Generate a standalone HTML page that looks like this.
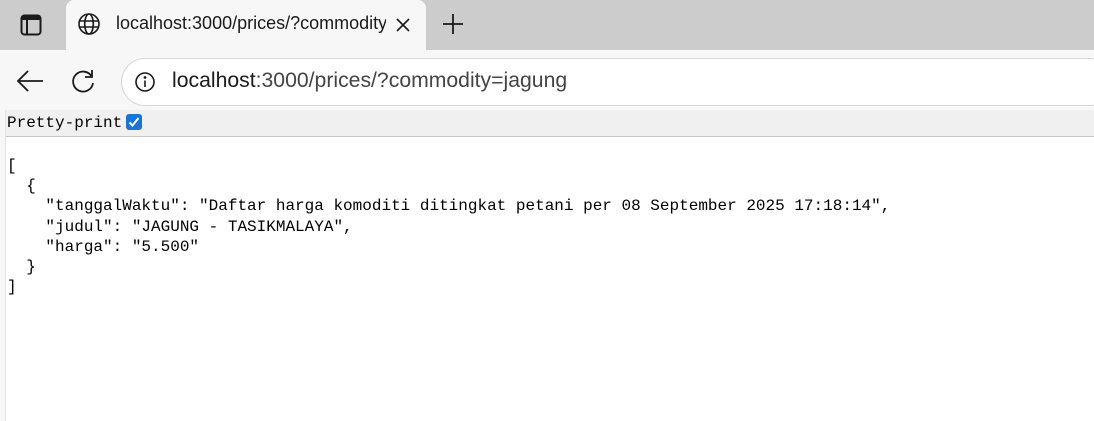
<!DOCTYPE html>
<html><head><style>
body{margin:0;width:1094px;height:421px;overflow:hidden;background:#f7f7f7;font-family:"Liberation Sans",sans-serif;position:relative}
.tabs{position:absolute;left:0;top:0;width:1094px;height:50px;background:#cccccc}
.tab{position:absolute;left:66px;top:0;width:360px;height:51px;background:#f7f7f7;border-radius:8px 8px 0 0}
.t{position:absolute;font-size:18px;color:#1a1a1a;white-space:nowrap}
.addr{position:absolute;left:121px;top:58px;width:990px;height:46px;background:#fff;border:1px solid #d6d6d6;border-radius:24px}
.page{position:absolute;left:5px;top:110px;width:1089px;height:311px;background:#fff;border-left:1px solid #e3e3e3}
.pp{position:absolute;left:0;top:0;width:1089px;height:26px;background:#f0f0f0;border-bottom:1px solid #c8c8c8;font-family:"Liberation Mono",monospace;font-size:16px;line-height:27px;padding-left:1px}
.cb{display:inline-block;width:16px;height:16px;background:#1a73d9;border-radius:3px;vertical-align:-3px;margin-left:4px;position:relative}
pre{position:absolute;left:1px;top:46px;margin:0;font-family:"Liberation Mono",monospace;font-size:16px;line-height:20.2px;color:#000}
</style></head><body>
<div class="tabs">
<svg style="position:absolute;left:20px;top:14px" width="22" height="22" viewBox="0 0 22 22"><rect x="1.5" y="1.5" width="19" height="19" rx="3" fill="none" stroke="#1a1a1a" stroke-width="2"/><rect x="2" y="2" width="18" height="4" fill="#1a1a1a"/><line x1="7" y1="6" x2="7" y2="20" stroke="#1a1a1a" stroke-width="2"/></svg>
<div class="tab">
<svg style="position:absolute;left:11px;top:12px" width="24" height="24" viewBox="0 0 24 24" fill="none" stroke="#1a1a1a" stroke-width="1.6"><circle cx="12" cy="12" r="10"/><ellipse cx="12" cy="12" rx="4.3" ry="10"/><line x1="2" y1="9" x2="22" y2="9"/><line x1="2" y1="15" x2="22" y2="15"/></svg>
<div class="t" style="left:50px;top:13px;width:270px;overflow:hidden">localhost:3000/prices/?commodity</div>
<svg style="position:absolute;left:330px;top:18px" width="14" height="14" viewBox="0 0 14 14" stroke="#1a1a1a" stroke-width="1.6"><line x1="1" y1="1" x2="13" y2="13"/><line x1="13" y1="1" x2="1" y2="13"/></svg>
</div>
<svg style="position:absolute;left:442px;top:13px" width="22" height="22" viewBox="0 0 22 22" stroke="#1a1a1a" stroke-width="1.8"><line x1="11" y1="1" x2="11" y2="21"/><line x1="1" y1="11" x2="21" y2="11"/></svg>
</div>
<svg style="position:absolute;left:16px;top:68px" width="28" height="26" viewBox="0 0 28 26" fill="none" stroke="#1a1a1a" stroke-width="1.8"><line x1="2" y1="13" x2="27" y2="13"/><polyline points="12,3 2,13 12,23"/></svg>
<svg style="position:absolute;left:71px;top:68px" width="26" height="26" viewBox="0 0 26 26" fill="none" stroke="#1a1a1a" stroke-width="1.8"><path d="M21 9 A10 10 0 1 0 22 15"/><polyline points="21,2 21,9 14,9"/></svg>
<div class="addr">
<svg style="position:absolute;left:12px;top:12px" width="22" height="22" viewBox="0 0 22 22" fill="none" stroke="#1a1a1a" stroke-width="1.6"><circle cx="11" cy="11" r="9"/><line x1="11" y1="9.5" x2="11" y2="16"/><circle cx="11" cy="6.5" r="0.6" fill="#1a1a1a"/></svg>
<div class="t" style="left:50px;top:10px;font-size:21.2px;color:#1a1a1a">localhost<span style="color:#444">:3000/prices/?commodity=jagung</span></div>
</div>
<div class="page">
<div class="pp">Pretty-print<span class="cb"><svg style="position:absolute;left:2px;top:2px" width="12" height="12" viewBox="0 0 12 12" fill="none" stroke="#fff" stroke-width="2"><polyline points="1.5,6.5 4.5,9.5 10.5,2"/></svg></span></div>
<pre>[
  {
    "tanggalWaktu": "Daftar harga komoditi ditingkat petani per 08 September 2025 17:18:14",
    "judul": "JAGUNG - TASIKMALAYA",
    "harga": "5.500"
  }
]</pre>
</div>
</body></html>
